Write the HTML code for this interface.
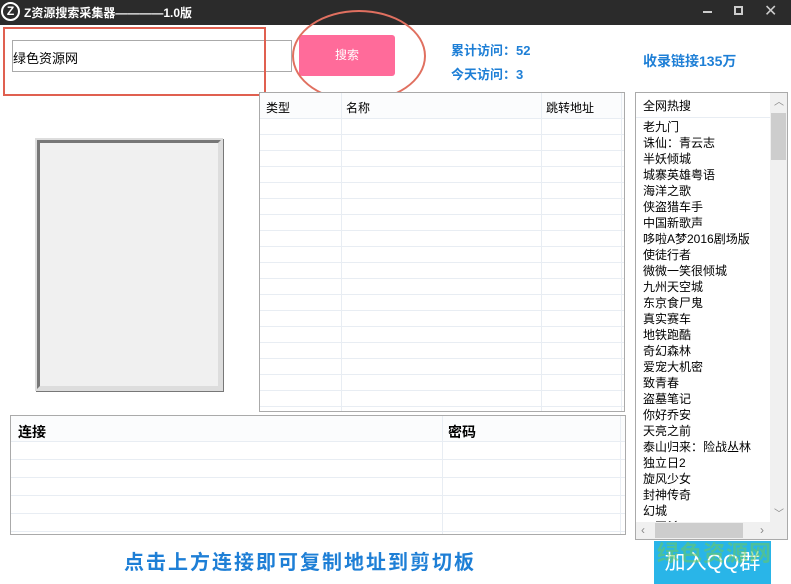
<!DOCTYPE html>
<html><head><meta charset="utf-8"><style>
*{margin:0;padding:0;box-sizing:border-box}
body{width:791px;height:584px;background:#fff;position:relative;overflow:hidden;font-family:"Liberation Sans","Noto Sans CJK SC",sans-serif;font-size:12px;color:#000}
.a{position:absolute}
.blue{color:#1e7fd6;font-weight:bold;font-size:13px}
.hl{position:absolute;left:0;right:0;height:1px;background:#e8edf3}
.vl{position:absolute;top:0;bottom:0;width:1px;background:#e8edf3}
</style></head><body>
<div class="a" style="left:0;top:0;width:791px;height:25px;background:#2b2b2b"></div>
<div class="a" style="left:1px;top:2px;width:19px;height:19px;border:2px solid #fff;border-radius:50%;color:#fff;font-weight:bold;font-size:12px;text-align:center;line-height:15px">Z</div>
<div class="a" style="left:24px;top:4px;color:#fff;font-weight:bold;font-size:12px">Z资源搜索采集器————1.0版</div>
<div class="a" style="left:703px;top:11px;width:9px;height:2px;background:#ccc"></div>
<div class="a" style="left:734px;top:6px;width:9px;height:9px;border:2px solid #ccc"></div>
<div class="a" style="left:764px;top:1px;color:#ccc;font-size:16px">✕</div>

<div class="a" style="left:12px;top:40px;width:280px;height:32px;border:1px solid #aaa"></div>
<div class="a" style="left:13px;top:48px;font-size:13px">绿色资源网</div>
<div class="a" style="left:3px;top:27px;width:263px;height:69px;border:2px solid #e06050"></div>
<div class="a" style="left:299px;top:35px;width:96px;height:41px;background:#ff6b9a;border-radius:3px;color:#fff;text-align:center;line-height:41px;font-size:12px">搜索</div>
<div class="a" style="left:292px;top:10px;width:134px;height:92px;border:2px solid #e07060;border-radius:50%"></div>

<div class="a blue" style="left:451px;top:40px">累计访问：52</div>
<div class="a blue" style="left:451px;top:64px">今天访问：3</div>
<div class="a blue" style="left:643px;top:51px;font-size:14px">收录链接135万</div>

<div class="a" style="left:37px;top:140px;width:184px;height:249px;background:#f0f0f0;border:3px solid;border-color:#777 #ddd #ddd #777;outline:2px solid #ddd;box-shadow:1px 1px 0 2px #777"></div>

<div class="a" style="left:259px;top:92px;width:366px;height:320px;border:1px solid #aaa;overflow:hidden">
<div class="a" style="left:0;top:0;right:0;height:25px;background:#fbfcfd"></div>
<div class="a" style="left:6px;top:6px">类型</div><div class="a" style="left:86px;top:6px">名称</div><div class="a" style="left:286px;top:6px">跳转地址</div>
<div class="vl" style="left:81px"></div><div class="vl" style="left:281px"></div><div class="vl" style="left:361px"></div>
<div class="hl" style="top:25px"></div><div class="hl" style="top:41px"></div><div class="hl" style="top:57px"></div><div class="hl" style="top:73px"></div><div class="hl" style="top:89px"></div><div class="hl" style="top:105px"></div><div class="hl" style="top:121px"></div><div class="hl" style="top:137px"></div><div class="hl" style="top:153px"></div><div class="hl" style="top:169px"></div><div class="hl" style="top:185px"></div><div class="hl" style="top:201px"></div><div class="hl" style="top:217px"></div><div class="hl" style="top:233px"></div><div class="hl" style="top:249px"></div><div class="hl" style="top:265px"></div><div class="hl" style="top:281px"></div><div class="hl" style="top:297px"></div><div class="hl" style="top:313px"></div>
</div>

<div class="a" style="left:10px;top:415px;width:616px;height:120px;border:1px solid #aaa;overflow:hidden">
<div class="a" style="left:0;top:0;right:0;height:25px;background:#fbfcfd"></div>
<div class="a" style="left:7px;top:6px;font-size:14px;font-weight:bold">连接</div><div class="a" style="left:437px;top:6px;font-size:14px;font-weight:bold">密码</div>
<div class="vl" style="left:431px"></div><div class="vl" style="left:609px"></div>
<div class="hl" style="top:25px"></div><div class="hl" style="top:43px"></div><div class="hl" style="top:61px"></div><div class="hl" style="top:79px"></div><div class="hl" style="top:97px"></div><div class="hl" style="top:115px"></div>
</div>
<div class="a" style="left:124px;top:546px;color:#1e7fd6;font-weight:bold;font-size:20px;letter-spacing:2px;white-space:nowrap">点击上方连接即可复制地址到剪切板</div>

<div class="a" style="left:635px;top:92px;width:153px;height:448px;border:1px solid #aaa;overflow:hidden;font-size:12px;line-height:16px">
<div class="a" style="left:7px;top:5px">全网热搜</div>
<div class="a" style="left:0;top:24px;width:134px;height:1px;background:#e8edf3"></div>
<div class="a" style="left:7px;top:26px">老九门<br>诛仙：青云志<br>半妖倾城<br>城寨英雄粤语<br>海洋之歌<br>侠盗猎车手<br>中国新歌声<br>哆啦A梦2016剧场版<br>使徒行者<br>微微一笑很倾城<br>九州天空城<br>东京食尸鬼<br>真实赛车<br>地铁跑酷<br>奇幻森林<br>爱宠大机密<br>致青春<br>盗墓笔记<br>你好乔安<br>天亮之前<br>泰山归来：险战丛林<br>独立日2<br>旋风少女<br>封神传奇<br>幻城<br>三国杀</div>
<div class="a" style="left:134px;top:0;width:17px;height:429px;background:#f0f0f0"></div>
<div class="a" style="left:135px;top:20px;width:15px;height:47px;background:#cdcdcd"></div>
<div class="a" style="left:138px;top:2px;color:#888;font-size:10px">︿</div>
<div class="a" style="left:138px;top:414px;color:#888;font-size:10px">﹀</div>
<div class="a" style="left:0;top:429px;width:151px;height:17px;background:#f0f0f0"></div>
<div class="a" style="left:19px;top:430px;width:88px;height:15px;background:#cdcdcd"></div>
<div class="a" style="left:5px;top:429px;color:#888">‹</div><div class="a" style="left:124px;top:429px;color:#888">›</div>
</div>

<div class="a" style="left:654px;top:541px;width:117px;height:43px;background:#29b5e8;color:#fff;font-size:21px;text-align:center;line-height:43px">加入QQ群</div>
<div class="a" style="left:657px;top:536px;color:rgba(110,200,90,0.55);font-size:22px;font-weight:bold;letter-spacing:1px">绿色资源网</div>
</body></html>
